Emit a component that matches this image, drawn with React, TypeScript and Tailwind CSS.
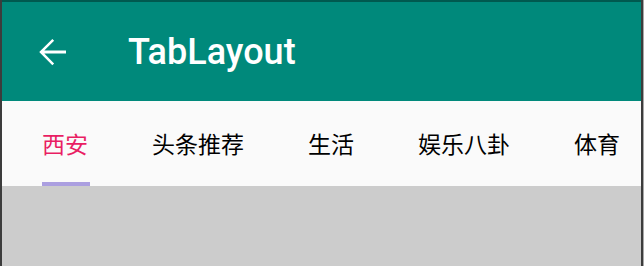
const TABS = ["西安", "头条推荐", "生活", "娱乐八卦", "体育"];

function BackArrow() {
  return (
    <svg width="42" height="42" viewBox="0 0 24 24" fill="white" aria-hidden>
      <path d="M20 11.1H7.6l5.6-5.6L12.2 4.5 4.7 12l7.5 7.5 1-1-5.6-5.6H20v-1.8z" />
    </svg>
  );
}

export default function App() {
  return (
    <div className="flex h-[266px] w-[644px] overflow-hidden bg-[#cccccc]">
      <div className="w-[2px] shrink-0 bg-[#3c3c3c]" />
      <div className="flex min-w-0 flex-1 flex-col">
        <div className="h-[2px] bg-[#00594f]" />
        <header className="flex h-[99px] items-center bg-[#00897b]">
          <div className="ml-[29px] flex h-[42px] w-[42px] items-center justify-center">
            <BackArrow />
          </div>
          <h1 className="ml-[55px] font-['Roboto',sans-serif] text-[36px] font-medium leading-none text-white">
            TabLayout
          </h1>
        </header>
        <nav className="flex h-[85px] items-stretch bg-[#fafafa] pl-[40px] shadow-[0_1px_0_#dedede]">
          {TABS.map((tab, i) => (
            <div
              key={tab}
              className="relative mr-[64px] flex shrink-0 items-center whitespace-nowrap"
            >
              <span
                className={
                  "font-['Noto_Sans_CJK_SC',sans-serif] text-[23px] leading-none " +
                  (i === 0 ? "text-[#e91e63]" : "text-black")
                }
              >
                {tab}
              </span>
              {i === 0 && (
                <div className="absolute bottom-0 left-0 h-[4px] w-[48px] bg-[#ab9fe0]" />
              )}
            </div>
          ))}
        </nav>
        <div className="flex-1 bg-[#cccccc]" />
      </div>
      <div className="w-[2px] shrink-0 bg-[#3c3c3c]" />
      <div className="w-[1px] shrink-0 bg-[#a8a8a8]" />
    </div>
  );
}
